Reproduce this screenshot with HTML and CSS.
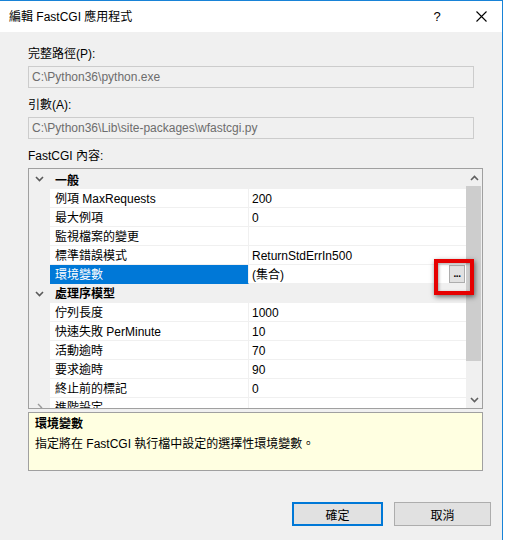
FILE: index.html
```html
<!DOCTYPE html>
<html lang="zh-Hant">
<head>
<meta charset="utf-8">
<title>編輯 FastCGI 應用程式</title>
<link rel="stylesheet" href="styles.css">
</head>
<body>
<div class="window">
  <div class="titlebar">
    <span class="title">編輯 FastCGI 應用程式</span>
    <span class="help">?</span>
    <span class="close"><svg width="11" height="11" viewBox="0 0 11 11"><path d="M0.5 0.5L10.5 10.5M10.5 0.5L0.5 10.5" stroke="#000" stroke-width="1.1" fill="none"/></svg></span>
  </div>
  <div class="content">
    <div class="label first">完整路徑(P):</div>
    <div class="textbox">C:\Python36\python.exe</div>
    <div class="label">引數(A):</div>
    <div class="textbox">C:\Python36\Lib\site-packages\wfastcgi.py</div>
    <div class="label">FastCGI 內容:</div>
    <div class="grid">
      <div class="rows">
        <div class="row cat cat-first">
          <span class="gutter"><svg class="chev" width="9" height="6" viewBox="0 0 9 6"><path d="M1 1L4.5 4.5L8 1" stroke="#5a5a5a" stroke-width="1.6" fill="none"/></svg></span>
          <span class="catname">一般</span>
        </div>
        <div class="row"><span class="gutter"></span><span class="name">例項 MaxRequests</span><span class="value">200</span></div>
        <div class="row"><span class="gutter"></span><span class="name">最大例項</span><span class="value">0</span></div>
        <div class="row"><span class="gutter"></span><span class="name">監視檔案的變更</span><span class="value"></span></div>
        <div class="row"><span class="gutter"></span><span class="name">標準錯誤模式</span><span class="value">ReturnStdErrIn500</span></div>
        <div class="row selected"><span class="gutter"></span><span class="name">環境變數</span><span class="value">(集合)<span class="ellipsis">...</span></span></div>
        <div class="row cat">
          <span class="gutter"><svg class="chev" width="9" height="6" viewBox="0 0 9 6"><path d="M1 1L4.5 4.5L8 1" stroke="#5a5a5a" stroke-width="1.6" fill="none"/></svg></span>
          <span class="catname">處理序模型</span>
        </div>
        <div class="row"><span class="gutter"></span><span class="name">佇列長度</span><span class="value">1000</span></div>
        <div class="row"><span class="gutter"></span><span class="name">快速失敗 PerMinute</span><span class="value">10</span></div>
        <div class="row"><span class="gutter"></span><span class="name">活動逾時</span><span class="value">70</span></div>
        <div class="row"><span class="gutter"></span><span class="name">要求逾時</span><span class="value">90</span></div>
        <div class="row"><span class="gutter"></span><span class="name">終止前的標記</span><span class="value">0</span></div>
        <div class="row"><span class="gutter"><svg class="chev" width="6" height="9" viewBox="0 0 6 9"><path d="M1 1L4.5 4.5L1 8" stroke="#9a9a9a" stroke-width="1.4" fill="none"/></svg></span><span class="name">進階設定</span><span class="value"></span></div>
      </div>
      <div class="scrollbar">
        <div class="arrow"><svg width="9" height="6" viewBox="0 0 9 6"><path d="M1 5L4.5 1.5L8 5" stroke="#606060" stroke-width="1.6" fill="none"/></svg></div>
        <div class="thumb"></div>
        <div class="track"></div>
        <div class="arrow"><svg width="9" height="6" viewBox="0 0 9 6"><path d="M1 1L4.5 4.5L8 1" stroke="#606060" stroke-width="1.6" fill="none"/></svg></div>
      </div>
    </div>
    <div class="desc">
      <div class="desc-title">環境變數</div>
      <div class="desc-text">指定將在 FastCGI 執行檔中設定的選擇性環境變數。</div>
    </div>
    <div class="buttons">
      <button class="btn ok">確定</button>
      <button class="btn cancel">取消</button>
    </div>
  </div>
  <div class="highlight"></div>
</div>
</body>
</html>
```
FILE: styles.css
```css
* { box-sizing: border-box; }
html, body { margin: 0; padding: 0; background: #fff; }
body {
  font-family: "Liberation Sans", "Noto Sans CJK TC", sans-serif;
  font-size: 12px;
  color: #000;
  width: 507px;
  height: 540px;
  overflow: hidden;
}
.window {
  position: relative;
  width: 503px;
  height: 540px;
  border-top: 1px solid #1883d7;
  border-right: 1px solid #1883d7;
  display: flex;
  flex-direction: column;
}
.titlebar {
  height: 31px;
  background: #fff;
  display: flex;
  align-items: center;
  padding-left: 9px;
}
.title { flex: 1; line-height: 16px; }
.help { width: 12px; text-align: center; font-size: 13px; margin-right: 33px; }
.close { width: 11px; height: 11px; margin-right: 15px; display: flex; }
.content {
  flex: 1;
  background: #f0f0f0;
  padding-left: 28px;
  display: flex;
  flex-direction: column;
}
.label { line-height: 16px; height: 16px; margin-top: 9px; }
.label.first { margin-top: 14px; }
.textbox {
  margin-top: 4px;
  width: 446px;
  height: 22px;
  border: 1px solid #cccccc;
  background: #f0f0f0;
  color: #6d6d6d;
  padding-left: 3px;
  line-height: 20px;
}
.grid {
  margin-top: 4px;
  width: 455px;
  height: 241px;
  border: 1px solid #a0a0a0;
  display: flex;
  background: #fff;
}
.rows { flex: 1; overflow: hidden; display: flex; flex-direction: column; }
.row { display: flex; height: 19px; flex-shrink: 0; line-height: 18px; }
.gutter { width: 21px; background: #f0f0f0; display: flex; align-items: center; justify-content: center; flex-shrink: 0; }
.name {
  width: 199px;
  padding: 1px 0 0 5px;
  border-right: 1px solid #f0f0f0;
  border-bottom: 1px solid #f0f0f0;
  white-space: nowrap;
}
.value {
  flex: 1;
  padding: 1px 0 0 3px;
  border-bottom: 1px solid #f0f0f0;
  display: flex;
  align-items: flex-start;
}
.row.cat { background: #f0f0f0; }
.row.cat-first { height: 20px; line-height: 20px; }
.catname { padding: 1px 0 0 5px; font-weight: bold; }
.row.cat-first .catname { padding-top: 2px; }
.row.selected .name { background: #0078d7; color: #fff; border-bottom-color: #0078d7; }
.ellipsis {
  margin-left: auto;
  margin-right: 1px;
  margin-top: -1px;
  width: 16px;
  height: 18px;
  background: #e1e1e1;
  border: 1px solid #adadad;
  font-size: 10px;
  font-weight: bold;
  line-height: 16px;
  text-align: center;
  letter-spacing: -0.5px;
}
.scrollbar { width: 16px; background: #f0f0f0; display: flex; flex-direction: column; }
.arrow { height: 17px; display: flex; align-items: center; justify-content: center; }
.thumb { height: 175px; background: #cdcdcd; margin: 0 1px 0 0; }
.track { flex: 1; }
.desc {
  margin-top: 3px;
  width: 455px;
  height: 59px;
  border: 1px solid #a0a0a0;
  background: #ffffe1;
  padding: 3px 6px;
  line-height: 16px;
}
.desc-title { font-weight: bold; }
.desc-text { margin-top: 4px; }
.buttons {
  margin-top: 31px;
  width: 463px;
  display: flex;
  justify-content: flex-end;
  gap: 11px;
}
.btn {
  font: inherit;
  height: 24px;
  background: #e1e1e1;
  border: 1px solid #adadad;
  padding: 0;
  color: #000;
}
.btn.ok { width: 91px; border: 2px solid #0078d7; }
.btn.cancel { width: 97px; }
.highlight {
  position: absolute;
  left: 434px;
  top: 258px;
  width: 40px;
  height: 36px;
  border: 4px solid #e60000;
  box-shadow: 1px 2px 5px rgba(0,0,0,0.55), inset 1px 1px 3px rgba(0,0,0,0.35);
}
```
